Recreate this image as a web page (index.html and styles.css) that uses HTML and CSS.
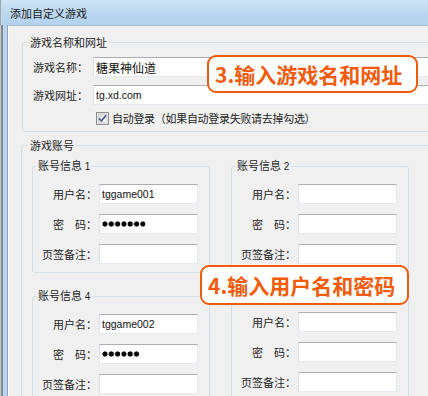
FILE: index.html
```html
<!DOCTYPE html>
<html lang="zh-CN">
<head>
<meta charset="utf-8">
<title>添加自定义游戏</title>
<link rel="stylesheet" href="styles.css">
</head>
<body>
<div class="window">
  <div class="titlebar">添加自定义游戏</div>
  <div class="body">
    <div class="frame-left"></div>
    <div class="client">
      <fieldset class="group g1">
        <legend>游戏名称和网址</legend>
        <div class="g1-body">
          <div class="row"><label>游戏名称：</label><div class="field name">糖果神仙道</div></div>
          <div class="row"><label>游戏网址：</label><div class="field url">tg.xd.com</div></div>
          <div class="row check-row">
            <svg class="checkbox" width="13" height="13" viewBox="0 0 13 13">
              <defs>
                <linearGradient id="cbg" x1="0" y1="0" x2="1" y2="1">
                  <stop offset="0" stop-color="#d9dcdf"/>
                  <stop offset="1" stop-color="#fbfbfb"/>
                </linearGradient>
              </defs>
              <rect x="0.5" y="0.5" width="12" height="12" fill="#f4f4f4" stroke="#8f8f8f"/>
              <rect x="2" y="2" width="9" height="9" fill="url(#cbg)" stroke="#b3b6ba" stroke-width="0.6"/>
              <path d="M3 6.4 L5.3 9 L10 3.4" fill="none" stroke="#4c5f8f" stroke-width="1.7"/>
            </svg>
            <span class="check-text">自动登录（如果自动登录失败请去掉勾选）</span>
          </div>
        </div>
      </fieldset>
      <fieldset class="group g2">
        <legend>游戏账号</legend>
        <div class="accounts">
          <fieldset class="acct">
            <legend>账号信息<span class="num"> 1</span></legend>
            <div class="acct-grid">
              <label>用户名：</label><div class="field">tggame001</div>
              <label>密　码：</label><div class="field"><span class="dots" style="width:44px"></span></div>
              <label>页签备注：</label><div class="field"></div>
            </div>
          </fieldset>
          <fieldset class="acct">
            <legend>账号信息<span class="num"> 2</span></legend>
            <div class="acct-grid">
              <label>用户名：</label><div class="field"></div>
              <label>密　码：</label><div class="field"></div>
              <label>页签备注：</label><div class="field"></div>
            </div>
          </fieldset>
          <fieldset class="acct">
            <legend>账号信息<span class="num"> 4</span></legend>
            <div class="acct-grid">
              <label>用户名：</label><div class="field">tggame002</div>
              <label>密　码：</label><div class="field"><span class="dots" style="width:38px"></span></div>
              <label>页签备注：</label><div class="field"></div>
            </div>
          </fieldset>
          <fieldset class="acct">
            <legend class="hidden-legend"></legend>
            <div class="acct-grid">
              <label>用户名：</label><div class="field"></div>
              <label>密　码：</label><div class="field"></div>
              <label>页签备注：</label><div class="field"></div>
            </div>
          </fieldset>
        </div>
      </fieldset>
    </div>
  </div>
  <div class="callout c3">3.输入游戏名和网址</div>
  <div class="callout c4">4.输入用户名和密码</div>
</div>
</body>
</html>
```
FILE: styles.css
```css
body {
  margin: 0;
  font-family: "Noto Sans CJK SC", sans-serif;
  font-size: 11px;
  color: #1e1e1e;
}

.window {
  position: relative;
  width: 428px;
  height: 396px;
  overflow: hidden;
  display: flex;
  flex-direction: column;
  background: #f0f0f0;
}

.titlebar {
  height: 25px;
  flex: none;
  display: flex;
  align-items: center;
  padding-left: 10px;
  line-height: 14px;
  background: linear-gradient(to bottom, #cfe4f6 0%, #bcd8f0 50%, #b3d2ee 100%);
  box-shadow: inset 1px 0 0 #9aa6b3, inset 2px 0 0 #c9dcee;
  color: #1a1a1a;
}

.body {
  flex: 1;
  display: flex;
  min-height: 0;
}

.frame-left {
  width: 8px;
  flex: none;
  background: linear-gradient(to right,
    #c8c8c8 0 1px,
    #7f8792 1px 3px,
    #b6d3ef 3px 7px,
    #92a3b6 7px 8px);
}

.client {
  flex: 1;
  min-width: 0;
  border-top: 1px solid #a9bacb;
  border-left: 1px solid #fbfbfb;
  padding: 9px 0 0 13px;
  overflow: hidden;
}

fieldset {
  margin: 0;
  padding: 0;
  border: 1px solid #d5dfe5;
  border-radius: 3px;
  min-width: 0;
  box-sizing: border-box;
}

legend {
  padding: 0 2px;
  line-height: 14px;
  font-size: 11px;
}

.hidden-legend {
  height: 14px;
  padding: 0;
}

.g1 {
  width: 440px;
}

.g1 legend {
  margin-left: 5px;
}

.g1-body {
  display: flex;
  flex-direction: column;
  gap: 8px;
  padding: 8px 0 6px 10px;
}

.row {
  display: flex;
  align-items: center;
  height: 20px;
}

.row label {
  width: 60px;
  flex: none;
}

.field {
  height: 20px;
  box-sizing: border-box;
  background: #fff;
  border: 1px solid #e3e9ef;
  border-top-color: #abadb3;
  border-left-color: #dbdfe6;
  padding-left: 2px;
  display: flex;
  align-items: center;
  font-family: "Liberation Sans", sans-serif;
  font-size: 10.5px;
  color: #111;
}

.row .field {
  flex: 1;
}

.field.name {
  font-family: "Noto Sans CJK SC", sans-serif;
  font-size: 12px;
}

.check-row {
  height: 14px;
  margin-top: -2px;
  padding-left: 63px;
  gap: 3px;
}

.check-text {
  letter-spacing: -0.3px;
}

.checkbox {
  flex: none;
}

.g2 {
  width: 440px;
  margin-top: 6px;
  margin-left: -1px;
}

.g2 > legend {
  margin-left: 6px;
}

.accounts {
  display: grid;
  grid-template-columns: 178px 178px;
  column-gap: 21px;
  row-gap: 15px;
  padding: 6px 0 0 10px;
}

.acct legend {
  margin-left: 3px;
}

.num {
  font-family: "Liberation Sans", sans-serif;
  font-size: 10px;
}

.acct-grid {
  display: grid;
  grid-template-columns: 56px 99px;
  column-gap: 2px;
  row-gap: 10px;
  padding: 10px 0 8px 8px;
  align-items: center;
}

.acct-grid label {
  text-align: right;
  white-space: nowrap;
}

.dots {
  display: inline-block;
  height: 6px;
  background: radial-gradient(circle at 3px 3px, #000 2.3px, transparent 2.9px) 0 0 / 6.3px 6px repeat-x;
}

.callout {
  position: absolute;
  box-sizing: border-box;
  border: 2.5px solid #f25b0c;
  border-radius: 9px;
  background: #fff;
  color: #f25b0c;
  font-weight: bold;
  font-size: 21px;
  line-height: 24px;
  display: flex;
  align-items: center;
  padding-left: 6px;
  white-space: nowrap;
}

.c3 {
  left: 207px;
  top: 55px;
  width: 211px;
  height: 38px;
}

.c4 {
  left: 200px;
  top: 265px;
  width: 209px;
  height: 40px;
}
```
